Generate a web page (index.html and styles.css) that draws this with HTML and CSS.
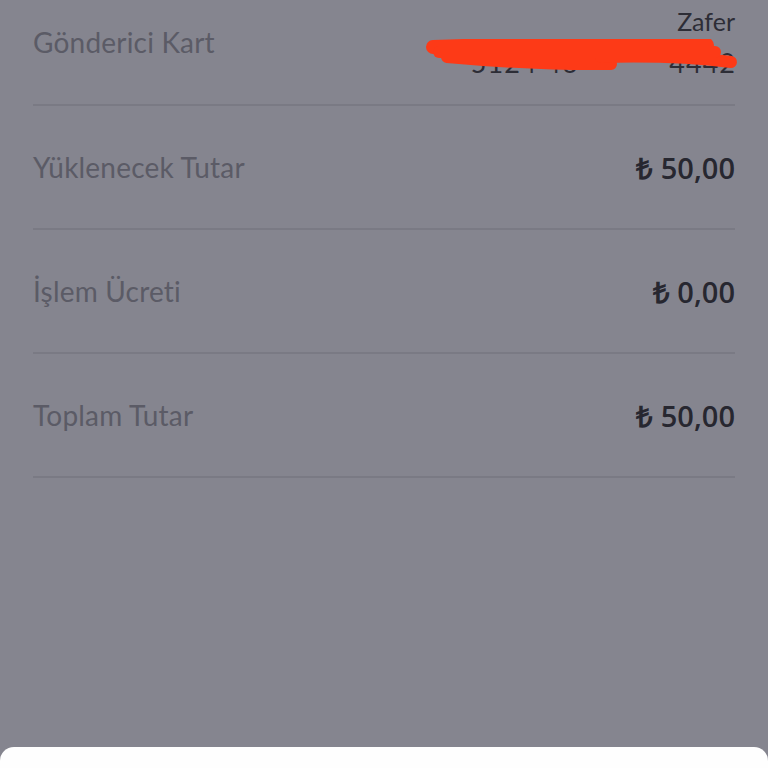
FILE: index.html
```html
<!DOCTYPE html>
<html lang="tr">
<head>
    <meta charset="UTF-8">
    <meta name="viewport" content="width=device-width, initial-scale=1.0">
    <title>Özet</title>
    <link rel="stylesheet" href="styles.css">
</head>
<body>
    <div class="summary">
        <div class="row first">
            <div class="label">Gönderici Kart</div>
            <div class="card">
                <div class="card-name">Zafer</div>
                <div class="card-number">5124 46** **** 4442</div>
                <svg class="scribble" width="320" height="40" viewBox="0 0 320 40">
                    <g stroke="#fd3a17" stroke-linecap="round" stroke-linejoin="round" fill="none">
                        <path d="M8 8 Q150 3 282 6" stroke-width="14"/>
                        <path d="M22 18 Q110 26 186 25" stroke-width="12"/>
                        <path d="M176 18 Q250 16 306 23" stroke-width="12"/>
                        <path d="M14 13 Q150 13 290 13" stroke-width="12"/>
                    </g>
                </svg>
            </div>
        </div>
        <div class="row">
            <div class="label">Yüklenecek Tutar</div>
            <div class="value">₺ 50,00</div>
        </div>
        <div class="row">
            <div class="label">İşlem Ücreti</div>
            <div class="value">₺ 0,00</div>
        </div>
        <div class="row">
            <div class="label">Toplam Tutar</div>
            <div class="value">₺ 50,00</div>
        </div>
    </div>
    <div class="sheet"></div>
</body>
</html>
```

FILE: styles.css
```css
body {
    margin: 0;
    min-height: 100vh;
    background-color: #85858f;
    font-family: Lato, "Noto Sans", sans-serif;
    overflow: hidden;
}
.summary {
    margin-top: -20px;
    padding: 0 33px;
}
.row {
    display: flex;
    justify-content: space-between;
    align-items: center;
    height: 122px;
    border-bottom: 2px solid #7a7a84;
}
.row.first {
    height: 124px;
}
.label {
    font-size: 28px;
    letter-spacing: 0.2px;
    color: #5b5b66;
    font-weight: 400;
}
.value {
    font-family: "Open Sans", sans-serif;
    font-size: 29px;
    font-weight: 600;
    color: #272730;
}
.card {
    position: relative;
    text-align: right;
    color: #2d2d36;
    font-size: 25px;
    line-height: 42px;
}
.card-number {
    font-size: 27px;
    letter-spacing: 1px;
    margin-right: -1px;
}
.scribble {
    position: absolute;
    right: -10px;
    top: 39px;
}
.sheet {
    position: fixed;
    left: 0;
    right: 0;
    bottom: 0;
    height: 21px;
    background-color: #fefefe;
    border-radius: 14px 14px 0 0;
}
```
